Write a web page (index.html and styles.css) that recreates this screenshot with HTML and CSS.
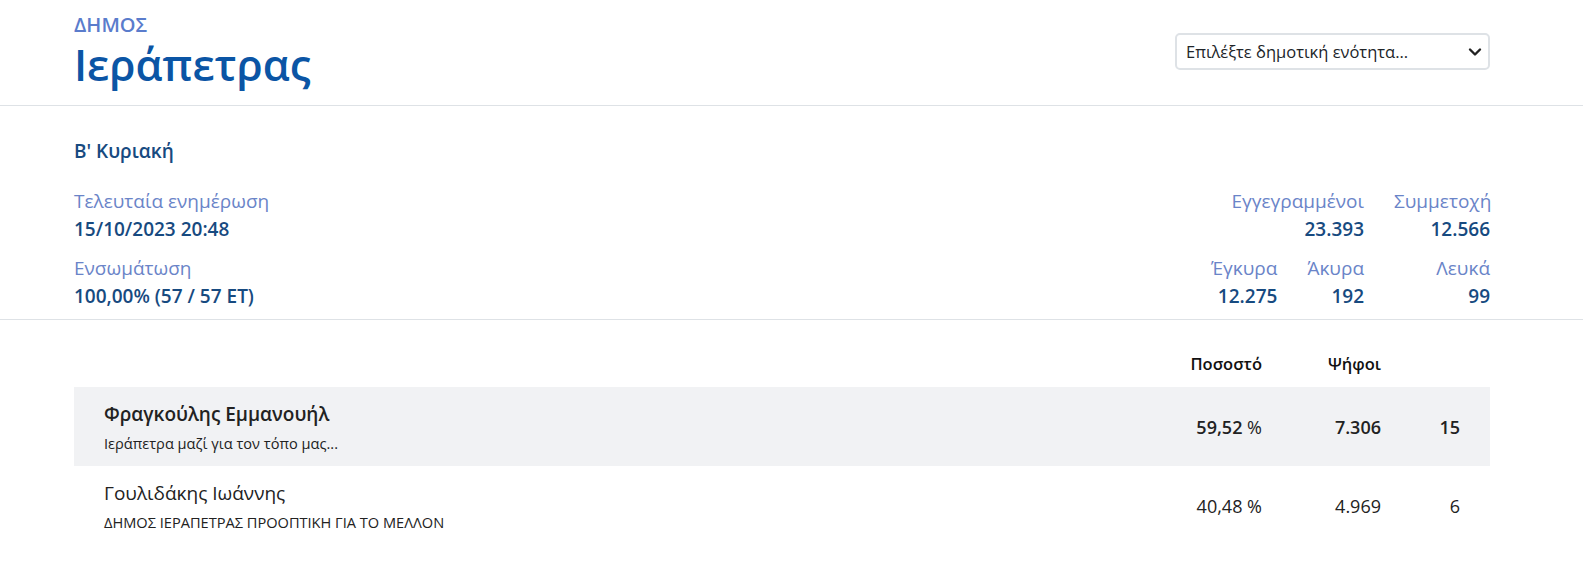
FILE: index.html
```html
<!DOCTYPE html>
<html>
<head>
  <meta name="viewport" content="width=device-width, initial-scale=1.0">
  <title>Δήμος Ιεράπετρας</title>
  <link rel="stylesheet" href="styles.css">
</head>
<body>
  <div class="header">
    <div class="container header-inner">
      <div class="title-group">
        <p class="kicker">Δημος</p>
        <h1>Ιεράπετρας</h1>
      </div>
      <div class="select-wrap">
        <select class="unit-select">
          <option>Επιλέξτε δημοτική ενότητα...</option>
        </select>
        <svg class="chevron" width="14" height="10" viewBox="0 0 14 10">
          <path d="M2 2.5 L7 7.5 L12 2.5" fill="none" stroke="#222" stroke-width="2.4" stroke-linecap="round" stroke-linejoin="round"/>
        </svg>
      </div>
    </div>
  </div>

  <div class="summary">
    <div class="container">
      <p class="round">Β' Κυριακή</p>
      <div class="summary-grid">
        <div class="summary-left">
          <div class="stat">
            <p class="label">Τελευταία ενημέρωση</p>
            <p class="value">15/10/2023 20:48</p>
          </div>
          <div class="stat">
            <p class="label">Ενσωμάτωση</p>
            <p class="value">100,00% (57 / 57 ΕΤ)</p>
          </div>
        </div>
        <div class="summary-right">
          <div class="stat span-two">
            <p class="label">Εγγεγραμμένοι</p>
            <p class="value">23.393</p>
          </div>
          <div class="stat">
            <p class="label">Συμμετοχή</p>
            <p class="value">12.566</p>
          </div>
          <div class="stat">
            <p class="label">Έγκυρα</p>
            <p class="value">12.275</p>
          </div>
          <div class="stat">
            <p class="label">Άκυρα</p>
            <p class="value">192</p>
          </div>
          <div class="stat">
            <p class="label">Λευκά</p>
            <p class="value">99</p>
          </div>
        </div>
      </div>
    </div>
  </div>

  <div class="container results">
    <div class="result-head">
      <div class="col-name"></div>
      <div class="col-pct">Ποσοστό</div>
      <div class="col-votes">Ψήφοι</div>
      <div class="col-seats"></div>
    </div>
    <div class="result-row winner">
      <div class="col-name">
        <p class="candidate">Φραγκούλης Εμμανουήλ</p>
        <p class="party">Ιεράπετρα μαζί για τον τόπο μας...</p>
      </div>
      <div class="col-pct"><b>59,52</b> %</div>
      <div class="col-votes">7.306</div>
      <div class="col-seats">15</div>
    </div>
    <div class="result-row">
      <div class="col-name">
        <p class="candidate">Γουλιδάκης Ιωάννης</p>
        <p class="party">ΔΗΜΟΣ ΙΕΡΑΠΕΤΡΑΣ ΠΡΟΟΠΤΙΚΗ ΓΙΑ ΤΟ ΜΕΛΛΟΝ</p>
      </div>
      <div class="col-pct">40,48 %</div>
      <div class="col-votes">4.969</div>
      <div class="col-seats">6</div>
    </div>
  </div>
</body>
</html>
```

FILE: styles.css
```css
html {
  overflow: hidden;
}

body {
  font-family: "Open Sans", "Noto Sans", sans-serif;
  background-color: #fff;
  color: #212529;
  margin: 0;
}

p {
  margin: 0;
}

.container {
  width: 1416px;
  margin-left: 74px;
}

/* header */

.header {
  border-bottom: 1px solid #dee2e6;
}

.header-inner {
  display: flex;
  justify-content: space-between;
  align-items: flex-start;
  padding: 13px 0 12px;
}

.kicker {
  text-transform: uppercase;
  font-size: 20px;
  font-weight: 600;
  color: #5a7ccc;
  line-height: 24px;
}

h1 {
  margin: 0;
  font-size: 43px;
  font-weight: 600;
  color: #0b55a5;
  line-height: 56px;
}

.select-wrap {
  position: relative;
  margin-top: 20px;
}

.unit-select {
  appearance: none;
  -webkit-appearance: none;
  width: 315px;
  height: 37px;
  padding: 0 40px 0 9px;
  font-family: inherit;
  font-size: 16.5px;
  color: #212529;
  background-color: #fff;
  border: 2px solid #dee2e6;
  border-radius: 5px;
}

.chevron {
  position: absolute;
  right: 8px;
  top: 14px;
  pointer-events: none;
}

/* summary */

.summary {
  border-bottom: 1px solid #dee2e6;
  padding: 31px 0 9px;
}

.round {
  font-size: 19px;
  font-weight: 600;
  color: #174a80;
  line-height: 28px;
  margin-bottom: 22px;
}

.summary-grid {
  display: flex;
  justify-content: space-between;
}

.stat {
  margin-bottom: 11px;
}

.stat:last-child {
  margin-bottom: 0;
}

.label {
  font-size: 19px;
  color: #6a84c8;
  line-height: 28px;
}

.value {
  font-size: 19px;
  font-weight: 600;
  color: #174a80;
  line-height: 28px;
}

.summary-right {
  display: grid;
  grid-template-columns: auto auto 96px;
  column-gap: 30px;
  row-gap: 11px;
  text-align: right;
}

.summary-right .stat {
  margin-bottom: 0;
}

.span-two {
  grid-column: 1 / 3;
}

/* results */

.results {
  padding-top: 29px;
}

.result-head,
.result-row {
  display: flex;
  align-items: center;
  padding: 0 30px;
}

.result-head {
  font-size: 16.5px;
  font-weight: 600;
  color: #111;
  height: 28px;
  margin-bottom: 10px;
}

.result-row {
  height: 79px;
  font-size: 18px;
  color: #222;
}

.winner {
  background-color: #f1f2f4;
  font-weight: 600;
}

.col-name {
  flex: 1;
}

.col-pct {
  width: 160px;
  text-align: right;
}

.col-pct b {
  font-weight: 600;
}

.winner .col-pct {
  font-weight: 400;
}

.col-votes {
  width: 119px;
  text-align: right;
}

.col-seats {
  width: 79px;
  text-align: right;
}

.candidate {
  font-size: 19px;
  line-height: 28px;
}

.party {
  font-size: 14.6px;
  font-weight: 400;
  line-height: 22px;
  margin-top: 4px;
}
```
